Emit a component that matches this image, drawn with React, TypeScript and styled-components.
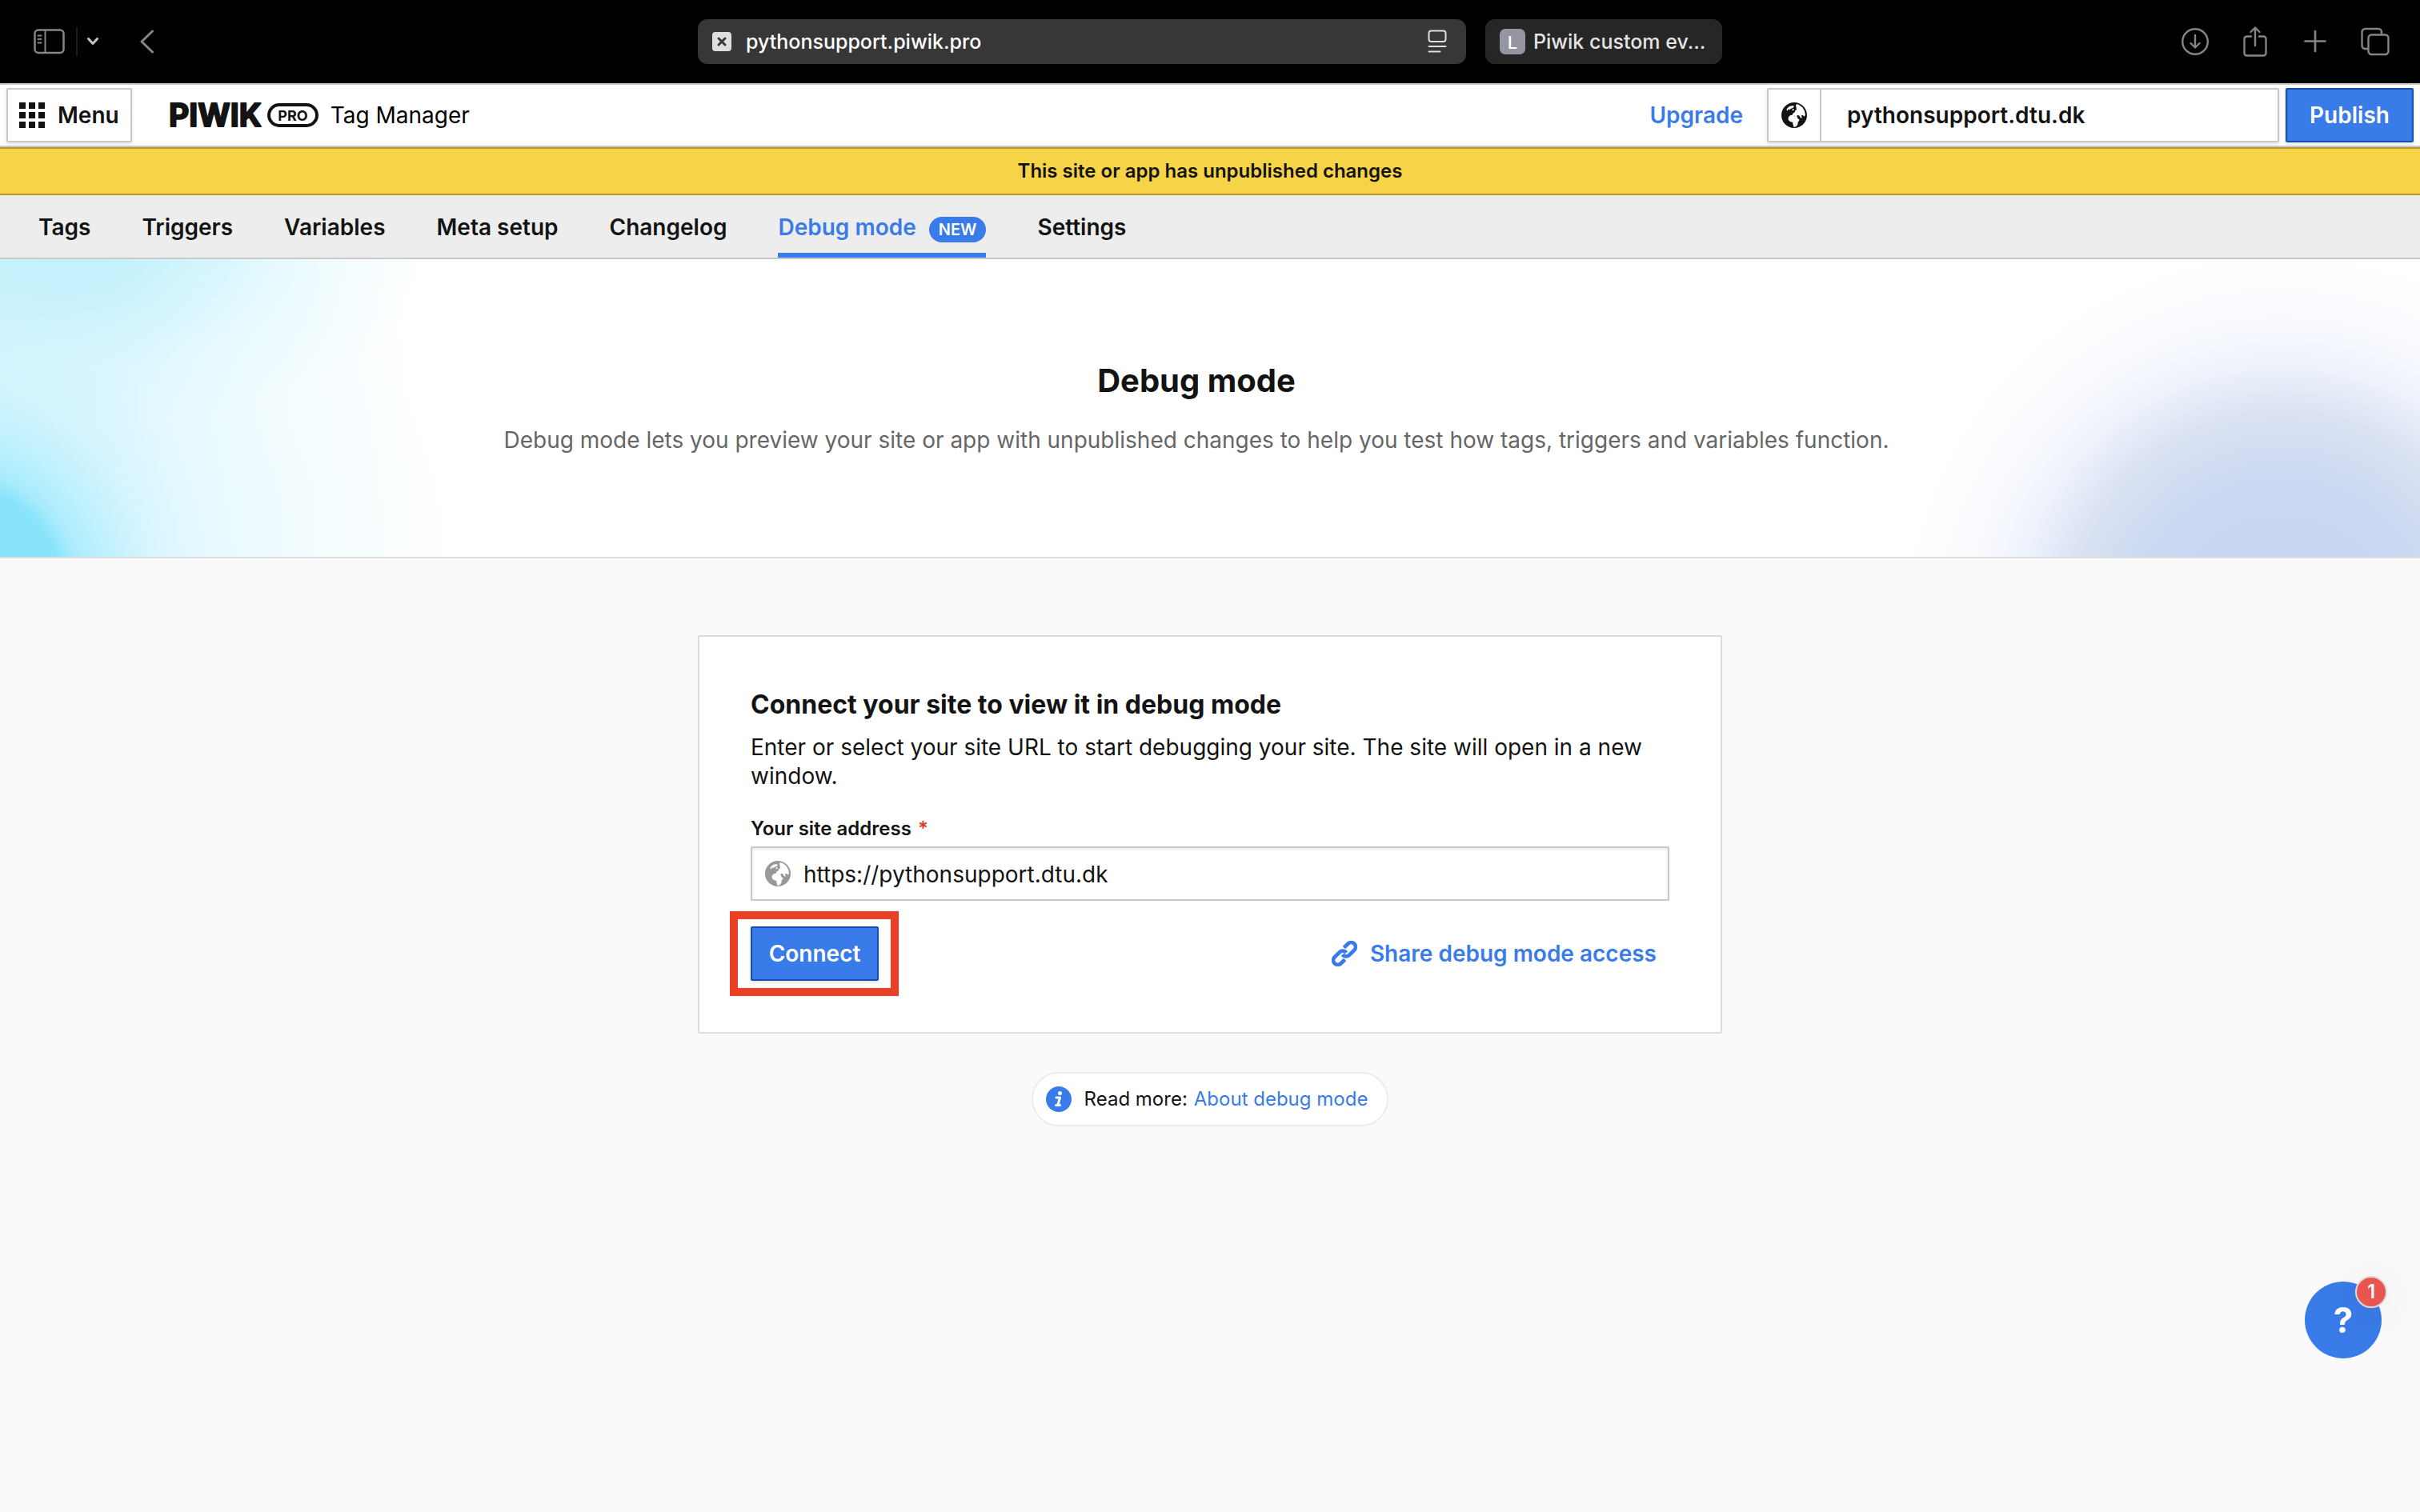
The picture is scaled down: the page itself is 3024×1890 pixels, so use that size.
import React from 'react';
import styled, { createGlobalStyle, css } from 'styled-components';

const color = {
  ink: '#131313',
  blue: '#397be8',
  blueDark: '#1c4bb0',
  line: '#c9c9c9',
  lineSoft: '#dddddd',
  muted: '#666666',
  chromeIcon: '#858585',
};

const GlobalStyle = createGlobalStyle`
  *, *::before, *::after { box-sizing: border-box; }
  body {
    margin: 0;
    background: #fafafa;
    color: ${color.ink};
    font: 400 28px/36px Inter, "Noto Sans", sans-serif;
  }
  button, input { font: inherit; color: inherit; margin: 0; }
  h1, h2, p { margin: 0; }
  svg { display: block; flex: none; }
`;

/* ---------- browser toolbar ---------- */

const BrowserBar = styled.div`
  display: grid;
  grid-template-columns: 1fr minmax(0, 1280px) 1fr;
  align-items: center;
  height: 104px;
  background: #000;
`;

const BrowserTools = styled.div<{ $end?: boolean }>`
  display: flex;
  align-items: center;
  justify-content: ${p => (p.$end ? 'flex-end' : 'flex-start')};
  gap: ${p => (p.$end ? '39px' : '14px')};
  padding: ${p => (p.$end ? '0 38px 0 0' : '0 0 0 42px')};
`;

const ToolButton = styled.button<{ $spaced?: boolean }>`
  display: flex;
  padding: 0;
  border: 0;
  background: none;
  color: ${color.chromeIcon};
  margin-left: ${p => (p.$spaced ? '38px' : '0')};
`;

const ToolDivider = styled.span`
  width: 2px;
  height: 36px;
  margin-right: -2px;
  background: #1c1c1c;
`;

const TabStrip = styled.div`
  display: flex;
  gap: 24px;
  font-size: 25px;
  font-weight: 500;
`;

const AddressTab = styled.label`
  display: flex;
  flex: 1;
  align-items: center;
  gap: 18px;
  height: 56px;
  padding: 0 24px 0 18px;
  border-radius: 12px;
  background: #373737;
  color: #fff;
`;

const AddressInput = styled.input`
  flex: 1;
  min-width: 0;
  padding: 0;
  border: 0;
  outline: 0;
  background: none;
`;

const BackgroundTab = styled.button`
  display: flex;
  align-items: center;
  gap: 10px;
  width: 296px;
  height: 56px;
  padding: 0 18px;
  border: 0;
  border-radius: 12px;
  background: #262626;
  color: #e4e4e4;
  white-space: nowrap;
`;

const TabInitial = styled.span`
  width: 32px;
  height: 32px;
  border-radius: 7px;
  background: #9696a3;
  color: #fff;
  font-size: 22px;
  line-height: 34px;
  text-align: center;
`;

/* ---------- application header ---------- */

const Header = styled.header`
  display: flex;
  align-items: center;
  height: 80px;
  padding: 0 8px;
  border: solid ${color.line};
  border-width: 2px 0;
  background: #fff;
`;

const boxed = css`
  height: 68px;
  border: 2px solid ${color.line};
  border-radius: 2px;
  background: #fff;
  box-shadow: 0 2px 4px rgba(0, 0, 0, 0.12);
`;

const MenuButton = styled.button`
  ${boxed}
  display: flex;
  align-items: center;
  gap: 16px;
  padding: 0 14px;
  font-weight: 600;
`;

const Brand = styled.div`
  display: flex;
  flex: 1;
  align-items: center;
  gap: 12px;
  margin-left: 44px;
  color: #000;
`;

const TextLink = styled.a<{ $strong?: boolean }>`
  display: flex;
  align-items: center;
  gap: 16px;
  color: ${color.blue};
  font-weight: ${p => (p.$strong ? 600 : 400)};
  text-decoration: none;
`;

const SitePicker = styled.div`
  ${boxed}
  display: flex;
  width: 640px;
  margin: 0 8px 0 30px;
`;

const SiteIconButton = styled.button`
  display: flex;
  align-items: center;
  justify-content: center;
  width: 66px;
  padding: 0;
  border: 0;
  border-right: 2px solid ${color.line};
  background: none;
`;

const SiteName = styled.button`
  flex: 1;
  padding: 0 32px;
  border: 0;
  background: none;
  font-weight: 600;
  text-align: left;
`;

const PrimaryButton = styled.button`
  min-width: 160px;
  height: 68px;
  padding: 0 20px;
  border: 2px solid ${color.blueDark};
  border-radius: 2px;
  background: ${color.blue};
  color: #fff;
  font-weight: 600;
  box-shadow: 0 2px 4px rgba(0, 0, 0, 0.12);
`;

const Banner = styled.div`
  height: 60px;
  border: solid #b8982f;
  border-width: 2px 0;
  background: #f7d347;
  font-size: 24px;
  font-weight: 600;
  line-height: 56px;
  text-align: center;
`;

const Nav = styled.nav`
  display: flex;
  gap: 64px;
  height: 80px;
  padding: 0 48px;
  border-bottom: 2px solid ${color.line};
  background: #ededed;
  font-weight: 600;
`;

const NavLink = styled.a<{ $active?: boolean }>`
  display: flex;
  align-items: baseline;
  gap: 16px;
  padding-top: 22px;
  color: ${p => (p.$active ? color.blue : 'inherit')};
  box-shadow: ${p => (p.$active ? `inset 0 -6px ${color.blue}` : 'none')};
  text-decoration: none;
`;

const NewBadge = styled.span`
  padding: 0 12px;
  border-radius: 16px;
  background: ${color.blue};
  color: #fff;
  font-size: 20px;
  line-height: 32px;
`;

/* ---------- page ---------- */

const Hero = styled.section`
  display: flex;
  flex-direction: column;
  gap: 32px;
  padding: 128px 34px 128px 0;
  border-bottom: 2px solid ${color.lineSoft};
  text-align: center;
  background:
    radial-gradient(circle at -60px calc(100% + 49px),
      #87e4fb 138px, rgba(161, 234, 252, 0.85) 162px, rgba(150, 233, 253, 0.6) 184px,
      rgba(150, 233, 253, 0.4) 220px, rgba(160, 235, 253, 0.26) 265px,
      rgba(170, 236, 253, 0.16) 350px,
      rgba(190, 241, 255, 0.1) 480px, rgba(255, 255, 255, 0) 660px),
    radial-gradient(ellipse 440px 230px at 105px -20px,
      rgba(170, 236, 250, 0.7), rgba(180, 239, 251, 0.45) 36%,
      rgba(200, 244, 253, 0.2) 68%, rgba(255, 255, 255, 0)),
    radial-gradient(circle 480px at calc(100% - 173px) calc(100% + 94px),
      #cad6f2 28%, #cedaf3 41%, #d3def1 50%, #dbe3f3 58%, #e4eaf7 63%,
      #ecf1fb 69%, #f4f7fd 76%, #fbfcff 86%, rgba(255, 255, 255, 0)),
    linear-gradient(90deg, #e5f8fe, #ebf9ff 140px, #f8fdff 320px, #fff 520px);
`;

const HeroTitle = styled.h1`
  font-size: 40px;
  font-weight: 700;
  line-height: 48px;
`;

const HeroText = styled.p`
  color: ${color.muted};
`;

const Main = styled.main`
  display: flex;
  flex-direction: column;
  align-items: center;
  gap: 48px;
  padding: 96px 32px;
`;

const Card = styled.form`
  width: 100%;
  max-width: 1280px;
  padding: 64px;
  border: 2px solid ${color.lineSoft};
  border-radius: 2px;
  background: #fff;
`;

const CardTitle = styled.h2`
  margin-bottom: 14px;
  font-size: 32px;
  font-weight: 700;
  line-height: 42px;
`;

const FieldLabel = styled.label`
  display: block;
  margin: 32px 0 6px;
  font-size: 24px;
  font-weight: 600;
  line-height: 32px;
`;

const Required = styled.span`
  margin-left: 8px;
  color: #d5402b;
`;

const Field = styled.div`
  display: flex;
  align-items: center;
  gap: 16px;
  height: 68px;
  padding: 0 16px;
  border: 2px solid ${color.line};
  box-shadow: inset 0 2px 4px rgba(0, 0, 0, 0.1);
  color: #999;
`;

const FieldInput = styled.input`
  flex: 1;
  min-width: 0;
  padding: 2px 0 0;
  border: 0;
  outline: 0;
  background: none;
  color: ${color.ink};
`;

const Actions = styled.div`
  display: flex;
  align-items: center;
  justify-content: space-between;
  margin-top: 32px;
  padding-right: 16px;
`;

const Highlight = styled.div`
  position: relative;

  &::after {
    content: '';
    position: absolute;
    inset: -19px -25px -19px -26px;
    border: 10px solid #eb4026;
    pointer-events: none;
  }
`;

const InfoPill = styled.div`
  display: flex;
  align-items: center;
  gap: 8px;
  height: 68px;
  padding: 0 24px 0 16px;
  border: 2px solid #ececec;
  border-radius: 34px;
  background: #fff;
  font-size: 24px;

  svg { margin-right: 8px; }
`;

const HelpButton = styled.button`
  position: fixed;
  right: 48px;
  bottom: 192px;
  width: 96px;
  height: 96px;
  padding: 0;
  border: 0;
  border-radius: 50%;
  background: ${color.blue};
  color: #fff;
  font-size: 44px;
  font-weight: 700;
  line-height: 96px;
`;

const HelpCount = styled.span`
  position: absolute;
  top: -7px;
  right: -7px;
  width: 40px;
  height: 40px;
  border: 2px solid #dcdcdc;
  border-radius: 50%;
  background: #ea5550;
  box-shadow: 0 8px 60px rgba(0, 0, 0, 0.1);
  font-size: 24px;
  font-weight: 600;
  line-height: 36px;
`;

/* ---------- drawings ---------- */

const line = {
  fill: 'none',
  stroke: 'currentColor',
  strokeLinecap: 'round' as const,
  strokeLinejoin: 'round' as const,
};

const SidebarIcon = () => (
  <svg width="39" height="32" viewBox="0 0 39 32" {...line} strokeWidth="2.5">
    <rect x="1.5" y="1.5" width="36" height="28.5" rx="4.5" />
    <path d="M14.5 2v28M5.5 8.5h4M5.5 13h4M5.5 17.5h4" strokeWidth="2" />
  </svg>
);

const ChevronIcon = () => (
  <svg width="14" height="10" viewBox="0 0 14 10" {...line} stroke="#c4c4c4" strokeWidth="3">
    <path d="m1.5 1.5 5.5 6 5.5-6" />
  </svg>
);

const BackIcon = () => (
  <svg width="18" height="30" viewBox="0 0 18 30" {...line} strokeWidth="3">
    <path d="M15.5 2 2 15l13.5 13" />
  </svg>
);

const DownloadIcon = () => (
  <svg width="36" height="36" viewBox="0 0 36 36" {...line} strokeWidth="2.4">
    <circle cx="18" cy="18" r="15.8" />
    <path d="M18 10v15M12.5 20l5.5 5.5 5.5-5.5" />
  </svg>
);

const ShareIcon = () => (
  <svg width="36" height="40" viewBox="0 0 36 40" {...line} strokeWidth="2.4">
    <path d="M13 13.500H7.500a3 3 0 0 0-3 3v18a3 3 0 0 0 3 3h21a3 3 0 0 0 3-3v-18a3 3 0 0 0-3-3H23M18 25V3M12.500 8 18 2.500 23.500 8" />
  </svg>
);

const PlusIcon = () => (
  <svg width="36" height="36" viewBox="0 0 36 36" {...line} strokeWidth="2.6">
    <path d="M18 5v25M5.500 17.500h25" />
  </svg>
);

const TabsIcon = () => (
  <svg width="36" height="36" viewBox="0 0 36 36" {...line} strokeWidth="2.4">
    <rect x="9.5" y="9.5" width="25" height="24.5" rx="4" />
    <path d="M9 27H5.500a4 4 0 0 1-4-4V6a4 4 0 0 1 4-4H22a4 4 0 0 1 4 4v3" />
  </svg>
);

const PageMarkIcon = () => (
  <svg width="24" height="24" viewBox="0 0 24 24">
    <rect width="24" height="24" rx="4" fill="#dedede" />
    <path d="m8 8 8 8M16 8l-8 8" stroke="#373737" strokeWidth="3" strokeLinecap="round" />
  </svg>
);

const ReaderIcon = () => (
  <svg width="24" height="30" viewBox="0 0 24 30" {...line} stroke="#dedede" strokeWidth="2">
    <rect x="1.5" y="1.5" width="21" height="13.5" rx="3" />
    <path d="M1.500 21h21M1.500 27.500h14" />
  </svg>
);

const GridIcon = () => (
  <svg width="32" height="32" viewBox="0 0 32 32" fill="currentColor">
    {[0, 12, 24].map(y => [0, 12, 24].map(x => <rect key={`${x}-${y}`} x={x} y={y} width="8" height="8" />))}
  </svg>
);

const Logo = () => (
  <svg width="192" height="56" viewBox="-4 -12 192 56" role="img" aria-label="Piwik Pro" fill={color.ink} fontFamily="Inter, sans-serif">
    <text x="-2" y="30" fontSize="39" fontWeight="700" stroke={color.ink} strokeWidth="2" strokeLinejoin="round">PIWIK</text>
    <rect x="123" y="3" width="60" height="26" rx="13" fill="none" stroke={color.ink} strokeWidth="4" />
    <text x="153" y="22.5" fontSize="18" fontWeight="700" textAnchor="middle">PRO</text>
  </svg>
);

const GlobeIcon = () => (
  <svg width="32" height="32" viewBox="12 12 96 96">
    <circle cx="60" cy="60" r="48" fill="currentColor" />
    <g fill="#fff">
      <path d="M31 42 34 34l8-7 13-3 5 3-5 6-8 2-3 5-5-3-4 6zM51 41l5-5 4 2-3 5z" />
      <path d="m66 22 5-4 8 4 12 9 8 13 3 15-4 6-5-5-6 1 2 9-4 1-5-8-6-4-5 4 3 4-6 1-4-6-5 1-4 4-7-1 1-6 6-1 2-6 7-4 2-6 5-4-1-6z" />
      <path d="m38 68 7-7 10-1 5 4 10 1 4 8 6 5-6 8-1 9-6 8-8 2-3-8-2-11-9-2-7-6z" />
    </g>
  </svg>
);

const LinkIcon = () => (
  <svg width="32" height="32" viewBox="0.5 0.5 23 23" fill="none" stroke="currentColor" strokeWidth="3.4">
    <path d="M11.600 6.740 15.170 3.170A4 4 0 0 1 20.830 8.830L16.300 13.360A4 4 0 0 1 10.300 12.900" />
    <path d="M12.400 17.260 8.830 20.830A4 4 0 0 1 3.170 15.170L7.700 10.640A4 4 0 0 1 13.700 11.100" />
  </svg>
);

const InfoIcon = () => (
  <svg width="32" height="32" viewBox="0 0 32 32">
    <circle cx="16" cy="16" r="16" fill={color.blue} />
    <circle cx="17.5" cy="8.5" r="2.5" fill="#fff" />
    <path d="M13 14h4.500l-2.500 9M12.500 23.500h5" fill="none" stroke="#fff" strokeWidth="3" strokeLinejoin="round" strokeLinecap="round" />
  </svg>
);

const navItems = [
  { label: 'Tags' },
  { label: 'Triggers' },
  { label: 'Variables' },
  { label: 'Meta setup' },
  { label: 'Changelog' },
  { label: 'Debug mode', active: true, badge: 'NEW' },
  { label: 'Settings' },
];

export default function App() {
  return (
    <>
      <GlobalStyle />
      <BrowserBar>
        <BrowserTools>
          <ToolButton aria-label="Sidebar"><SidebarIcon /></ToolButton>
          <ToolDivider />
          <ToolButton aria-label="Tab groups"><ChevronIcon /></ToolButton>
          <ToolButton aria-label="Back" $spaced><BackIcon /></ToolButton>
        </BrowserTools>
        <TabStrip>
          <AddressTab>
            <PageMarkIcon />
            <AddressInput aria-label="Address" defaultValue="pythonsupport.piwik.pro" />
            <ReaderIcon />
          </AddressTab>
          <BackgroundTab>
            <TabInitial>L</TabInitial>
            Piwik custom ev...
          </BackgroundTab>
        </TabStrip>
        <BrowserTools $end>
          <ToolButton aria-label="Downloads"><DownloadIcon /></ToolButton>
          <ToolButton aria-label="Share"><ShareIcon /></ToolButton>
          <ToolButton aria-label="New tab"><PlusIcon /></ToolButton>
          <ToolButton aria-label="Tab overview"><TabsIcon /></ToolButton>
        </BrowserTools>
      </BrowserBar>

      <Header>
        <MenuButton><GridIcon />Menu</MenuButton>
        <Brand><Logo />Tag Manager</Brand>
        <TextLink href="#upgrade" $strong>Upgrade</TextLink>
        <SitePicker>
          <SiteIconButton aria-label="Site type"><GlobeIcon /></SiteIconButton>
          <SiteName>pythonsupport.dtu.dk</SiteName>
        </SitePicker>
        <PrimaryButton>Publish</PrimaryButton>
      </Header>
      <Banner>This site or app has unpublished changes</Banner>
      <Nav>
        {navItems.map(item => (
          <NavLink key={item.label} href="#" $active={item.active}>
            {item.label}
            {item.badge && <NewBadge>{item.badge}</NewBadge>}
          </NavLink>
        ))}
      </Nav>

      <Hero>
        <HeroTitle>Debug mode</HeroTitle>
        <HeroText>
          Debug mode lets you preview your site or app with unpublished changes to help you test how tags, triggers and
          variables function.
        </HeroText>
      </Hero>

      <Main>
        <Card onSubmit={e => e.preventDefault()}>
          <CardTitle>Connect your site to view it in debug mode</CardTitle>
          <p>Enter or select your site URL to start debugging your site. The site will open in a new window.</p>
          <FieldLabel htmlFor="site-address">
            Your site address<Required>*</Required>
          </FieldLabel>
          <Field>
            <GlobeIcon />
            <FieldInput id="site-address" type="text" defaultValue="https://pythonsupport.dtu.dk" />
          </Field>
          <Actions>
            <Highlight>
              <PrimaryButton type="submit">Connect</PrimaryButton>
            </Highlight>
            <TextLink href="#share" $strong><LinkIcon />Share debug mode access</TextLink>
          </Actions>
        </Card>
        <InfoPill>
          <InfoIcon />
          <span>Read more:</span>
          <TextLink href="#about">About debug mode</TextLink>
        </InfoPill>
      </Main>

      <HelpButton aria-label="Help, 1 notification">
        ?<HelpCount>1</HelpCount>
      </HelpButton>
    </>
  );
}
